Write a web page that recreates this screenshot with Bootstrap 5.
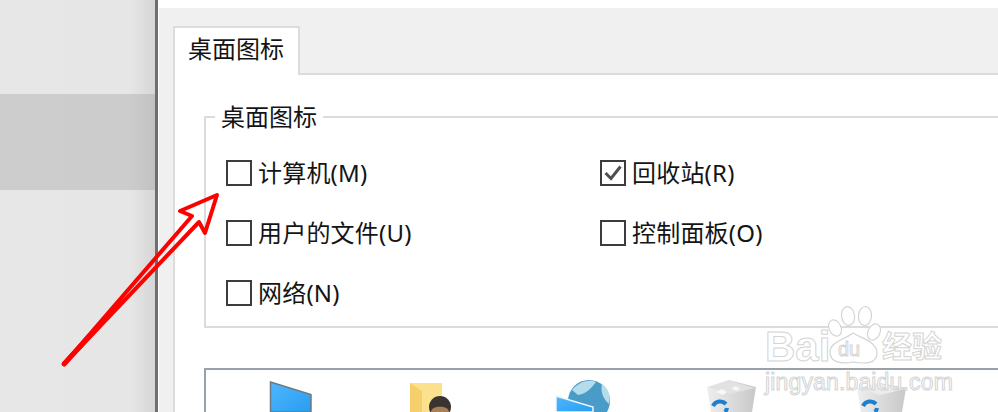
<!DOCTYPE html>
<html lang="zh-CN">
<head>
    <meta charset="UTF-8">
    <meta name="viewport" content="width=device-width, initial-scale=1.0">
    <title>桌面图标</title>
    <link href="https://cdn.jsdelivr.net/npm/bootstrap@5.3.0/dist/css/bootstrap.min.css" rel="stylesheet">
    <style>
        html, body {
            height: 412px;
            overflow: hidden;
        }
        body {
            position: relative;
            background: #f0f0f0;
            color: #141414;
            font-family: "Noto Sans", "Noto Sans CJK SC", sans-serif;
            font-size: 24px;
            line-height: 30px;
        }
        .side-pane {
            width: 158px;
            height: 412px;
            padding-top: 94px;
            background: linear-gradient(to right, #e7e7e7 0, #e6e6e6 130px, #d6d6d6 155px);
            border-right: 3px solid #6e6e6e;
        }
        .side-active {
            height: 96px;
            background: linear-gradient(to right, #cdcdcd 0, #cccccc 130px, #c2c2c2 155px);
        }
        .dlg-pane {
            border-left: 1px solid #fff;
        }
        .dlg-top {
            height: 8px;
            background: #fff;
        }
        .tab-strip {
            height: 67px;
            margin-left: 14px;
            padding-top: 18px;
            border-bottom: 2px solid #dcdcdc;
        }
        .tab-item {
            width: 127px;
            height: 49px;
            padding: 6px 0 0 13px;
            background: #fff;
            border: 2px solid #dcdcdc;
            border-bottom: 0;
        }
        .tab-page {
            height: 337px;
            margin-left: 14px;
            padding: 41px 0 0 29px;
            background: #fff;
            border-left: 2px solid #dcdcdc;
        }
        .group-box {
            height: 212px;
            margin-right: -4px;
            padding: 40px 0 0 20px;
            position: relative;
            border: 2px solid #dcdcdc;
            border-right: 0;
        }
        .group-title {
            position: absolute;
            top: -16px;
            left: 9px;
            padding: 0 6px;
            background: #fff;
        }
        .opt-grid {
            display: grid;
            grid-template-columns: 374px 1fr;
            row-gap: 30px;
        }
        .opt-item {
            height: 30px;
            gap: 6px;
            letter-spacing: .2px;
        }
        .tick-box {
            width: 26px;
            height: 26px;
            flex: none;
            border: 2px solid #3c3c3c;
            background: #fff;
            display: block;
        }
        .icon-list {
            height: 60px;
            margin-top: 40px;
            position: relative;
            background: #fff;
            border: 2px solid #9aa0a8;
            border-right: 0;
            border-bottom: 0;
            overflow: hidden;
        }
        .icon-list svg {
            display: block;
        }
        .overlay-svg {
            position: absolute;
            left: 0;
            top: 0;
            pointer-events: none;
        }
        .wm-logo {
            position: absolute;
            left: 765px;
            top: 325px;
            color: #fff;
            font-family: "Liberation Sans", "Noto Sans CJK SC", sans-serif;
            -webkit-text-stroke: 1px #d4d4d4;
            white-space: nowrap;
        }
        .wm-bai {
            position: absolute;
            left: 0;
            top: 0;
            font-size: 42px;
            line-height: 44px;
            font-weight: 700;
        }
        .wm-du {
            position: absolute;
            left: 73px;
            top: 12px;
            font-size: 20px;
            line-height: 24px;
        }
        .wm-jy {
            position: absolute;
            left: 117px;
            top: 2px;
            font-size: 30px;
            line-height: 40px;
            font-weight: 700;
        }
        .wm-url {
            position: absolute;
            left: 0;
            top: 43px;
            font-size: 23px;
            line-height: 28px;
            letter-spacing: .15px;
        }
    </style>
</head>
<body>
    <div class="d-flex">
        <div class="side-pane flex-shrink-0">
            <div class="side-active"></div>
        </div>
        <div class="dlg-pane flex-grow-1">
            <div class="dlg-top"></div>
            <div class="tab-strip">
                <div class="tab-item">桌面图标</div>
            </div>
            <div class="tab-page">
                <div class="group-box">
                    <div class="group-title">桌面图标</div>
                    <div class="opt-grid">
                        <label class="opt-item d-flex align-items-center"><span class="tick-box"></span>计算机(M)</label>
                        <label class="opt-item d-flex align-items-center">
                            <svg class="tick-box" viewBox="0 0 22 22"><path d="M3.500 11 9 16.500 18.500 4.500" fill="none" stroke="#505050" stroke-width="3"/></svg>回收站(R)
                        </label>
                        <label class="opt-item d-flex align-items-center"><span class="tick-box"></span>用户的文件(U)</label>
                        <label class="opt-item d-flex align-items-center"><span class="tick-box"></span>控制面板(O)</label>
                        <label class="opt-item d-flex align-items-center"><span class="tick-box"></span>网络(N)</label>
                    </div>
                </div>
                <div class="icon-list">
                    <svg width="792" height="42" viewBox="206 370 792 42">
                        <defs>
                            <linearGradient id="scr" x1="0" y1="0" x2="1" y2="1">
                                <stop offset="0" stop-color="#4db8ff"/>
                                <stop offset="1" stop-color="#2a9cf0"/>
                            </linearGradient>
                            <linearGradient id="bin" x1="0" y1="0" x2="1" y2="0">
                                <stop offset="0" stop-color="#eeeeee"/>
                                <stop offset="1" stop-color="#c8c8c8"/>
                            </linearGradient>
                        </defs>
                        <!-- computer -->
                        <path d="M270.5 382 311 394.500 311 412 270.500 412Z" fill="url(#scr)" stroke="#6d7a86" stroke-width="1.500"/>
                        <!-- user folder -->
                        <path d="M410 383H442V412H410Z" fill="#fbe08e"/>
                        <path d="M410 383 422 391V412H410Z" fill="#f6cf6c"/>
                        <circle cx="440" cy="407" r="11" fill="#3a3430"/>
                        <path d="M431 412C431 405 449 405 449 412Z" fill="#a98058"/>
                        <!-- network -->
                        <circle cx="589" cy="401" r="21" fill="#4a9cc8"/>
                        <path d="M572 390C579 382 588 379 596 382 592 387 587 394 578 395ZM602 384C609 389 611 396 609 404 604 400 600 392 602 384Z" fill="#b5dcea"/>
                        <path d="M556 396 593 407V412H556Z" fill="url(#scr)" stroke="#eef6fb" stroke-width="1.500"/>
                        <!-- full bin -->
                        <path d="M707 387 729 380 756 387 752 412H711Z" fill="url(#bin)"/>
                        <path d="M708 387 729 381 755 388 730 394Z" fill="#e2e2e2"/>
                        <path d="M716 392l6-3 5 3-4 3ZM734 386l6 2-3 3-5-2Z" fill="#f7f7f7"/>
                        <path d="M713 406a8 8 0 0 1 13-2M727 408a8 8 0 0 1-2 4" fill="none" stroke="#1c7fd0" stroke-width="4"/>
                        <!-- empty bin -->
                        <path d="M857 388 880 383 906 388 902 412H861Z" fill="url(#bin)"/>
                        <path d="M858 388 880 384 905 389 880 395Z" fill="#ececec"/>
                        <path d="M863 406a8 8 0 0 1 13-2M877 408a8 8 0 0 1-2 4" fill="none" stroke="#1c7fd0" stroke-width="4"/>
                    </svg>
                </div>
            </div>
        </div>
    </div>

    <!-- red arrow annotation -->
    <svg class="overlay-svg" width="998" height="412" viewBox="0 0 998 412">
        <path d="M64 364 192 216 180 211 217 195 205 233 199 222Z" fill="none" stroke="#ff0000" stroke-width="4" stroke-linejoin="round" stroke-linecap="round"/>
        <path d="M64 364 118 305" fill="none" stroke="#ff0000" stroke-width="5" stroke-linecap="round"/>
        <!-- paw of the watermark -->
        <g fill="#fff" stroke="#d4d4d4" stroke-width="1.200">
            <ellipse cx="835" cy="328" rx="6" ry="8.500" transform="rotate(-25 835 328)"/>
            <ellipse cx="848" cy="316" rx="6.500" ry="9.500" transform="rotate(-8 848 316)"/>
            <ellipse cx="865" cy="316" rx="6.500" ry="9.500" transform="rotate(5 865 316)"/>
            <ellipse cx="874" cy="332" rx="6" ry="8.500" transform="rotate(25 874 332)"/>
            <path d="M830 352C830 342 844 340 853 333 863 339 877 342 877 353 877 364 865 364 853 362 842 364 830 363 830 352Z"/>
        </g>
    </svg>

    <div class="wm-logo">
        <span class="wm-bai">Bai</span>
        <span class="wm-du">du</span>
        <span class="wm-jy">经验</span>
        <span class="wm-url">jingyan.baidu.com</span>
    </div>

    <script src="https://cdn.jsdelivr.net/npm/bootstrap@5.3.0/dist/js/bootstrap.bundle.min.js"></script>
</body>
</html>
